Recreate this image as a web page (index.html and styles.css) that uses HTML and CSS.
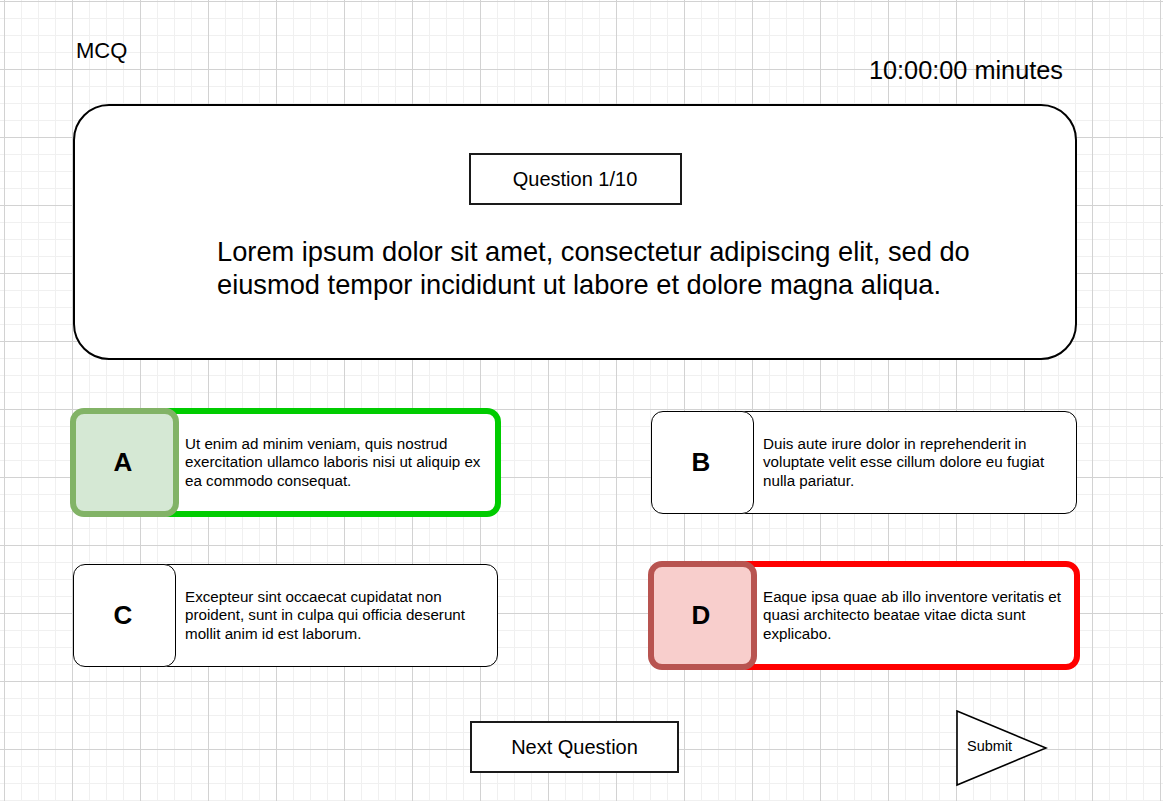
FILE: index.html
```html
<!DOCTYPE html>
<html lang="en">
<head>
<meta charset="utf-8">
<title>MCQ</title>
<link rel="stylesheet" href="styles.css">
</head>
<body>
<div class="page">
  <header class="header">
    <div class="brand">MCQ</div>
    <div class="timer">10:00:00 minutes</div>
  </header>

  <section class="card">
    <div class="badge">Question 1/10</div>
    <p class="question">Lorem ipsum dolor sit amet, consectetur adipiscing elit, sed do eiusmod tempor incididunt ut labore et dolore magna aliqua.</p>
  </section>

  <section class="options">
    <div class="option correct">
      <div class="letter">A</div>
      <div class="answer">Ut enim ad minim veniam, quis nostrud exercitation ullamco laboris nisi ut aliquip ex ea commodo consequat.</div>
    </div>
    <div class="option">
      <div class="letter">B</div>
      <div class="answer">Duis aute irure dolor in reprehenderit in voluptate velit esse cillum dolore eu fugiat nulla pariatur.</div>
    </div>
    <div class="option">
      <div class="letter">C</div>
      <div class="answer">Excepteur sint occaecat cupidatat non proident, sunt in culpa qui officia deserunt mollit anim id est laborum.</div>
    </div>
    <div class="option wrong">
      <div class="letter">D</div>
      <div class="answer">Eaque ipsa quae ab illo inventore veritatis et quasi architecto beatae vitae dicta sunt explicabo.</div>
    </div>
  </section>

  <footer class="footer">
    <div class="next">Next Question</div>
    <div class="submit">
      <svg class="submit-shape" width="92" height="77" viewBox="0 0 92 77" aria-hidden="true">
        <polygon points="1,1 1,75 90,38" fill="#ffffff" stroke="#000000" stroke-width="1.6" stroke-linejoin="miter"/>
      </svg>
      <span class="submit-label">Submit</span>
    </div>
  </footer>
</div>
</body>
</html>
```

FILE: styles.css
```css
* {
  box-sizing: border-box;
}

html {
  min-height: 100%;
  background-color: #ffffff;
  background-image:
    linear-gradient(to right, #d2d2d2 1px, transparent 1px),
    linear-gradient(to bottom, #d2d2d2 1px, transparent 1px),
    linear-gradient(to right, #f0f0f0 1px, transparent 1px),
    linear-gradient(to bottom, #f0f0f0 1px, transparent 1px);
  background-size: 68px 68px, 68px 68px, 17px 17px, 17px 17px;
  background-position: 4px 1px, 4px 1px, 4px 1px, 4px 1px;
}

body {
  margin: 0;
  font-family: "Liberation Sans", Arial, sans-serif;
  color: #000000;
}

.page {
  width: 1163px;
  height: 801px;
  padding: 40px 0 0 73px;
}

.header {
  width: 1004px;
  height: 64px;
  display: flex;
  justify-content: space-between;
  align-items: flex-start;
}

.brand {
  font-size: 22px;
  line-height: 1;
  padding-left: 3px;
}

.timer {
  font-size: 25.3px;
  line-height: 1;
  margin-top: 18px;
  padding-right: 14px;
}

.card {
  width: 1004px;
  height: 256px;
  border: 2px solid #000000;
  border-radius: 36px;
  background: #ffffff;
  display: flex;
  flex-direction: column;
  align-items: center;
  padding-top: 47px;
}

.badge {
  width: 213px;
  height: 52px;
  border: 2px solid #1a1a1a;
  display: flex;
  align-items: center;
  justify-content: center;
  font-size: 20px;
  background: #ffffff;
}

.question {
  align-self: stretch;
  margin: 31px 0 0 0;
  padding: 0 90px 0 142px;
  font-size: 27.25px;
  line-height: 32.5px;
}

.options {
  margin-top: 51px;
  width: 1004px;
  display: grid;
  grid-template-columns: 425px 426px;
  column-gap: 153px;
  row-gap: 50px;
}

.option {
  display: flex;
  align-items: stretch;
  height: 103px;
}

.letter {
  position: relative;
  z-index: 1;
  flex: none;
  width: 103px;
  border: 1px solid #000000;
  border-radius: 12px;
  background: #ffffff;
  display: flex;
  align-items: center;
  justify-content: center;
  padding-right: 3px;
  font-size: 26px;
  font-weight: bold;
}

.answer {
  flex: 1;
  margin-left: -20px;
  border: 1px solid #000000;
  border-radius: 12px;
  background: #ffffff;
  display: flex;
  align-items: center;
  padding: 0 3px 0 28px;
  font-size: 15.2px;
  line-height: 18.3px;
}

.option.correct .letter,
.option.wrong .letter {
  width: 109px;
  margin: -3px -3px -3px -3px;
  border-width: 6px;
  border-radius: 14px;
}

.option.correct .answer,
.option.wrong .answer {
  margin: -3px -3px -3px -20px;
  border-width: 6px;
  border-radius: 14px;
  padding: 0 0 0 23px;
}

.option.correct .letter {
  border-color: #82b366;
  background: #d5e8d4;
}

.option.correct .answer {
  border-color: #00cc00;
}

.option.wrong .letter {
  border-color: #b85450;
  background: #f8cecc;
}

.option.wrong .answer {
  border-color: #ff0000;
}

.footer {
  display: flex;
  align-items: flex-start;
  margin-top: 43px;
}

.next {
  margin: 11px 0 0 397px;
  width: 209px;
  height: 52px;
  border: 2px solid #1a1a1a;
  background: #ffffff;
  display: flex;
  align-items: center;
  justify-content: center;
  font-size: 20px;
}

.submit {
  position: relative;
  margin-left: 277px;
  width: 92px;
  height: 77px;
  display: flex;
  align-items: center;
  padding: 0 0 5px 11px;
}

.submit-shape {
  position: absolute;
  left: 0;
  top: 0;
}

.submit-label {
  position: relative;
  font-size: 14.5px;
}
```
